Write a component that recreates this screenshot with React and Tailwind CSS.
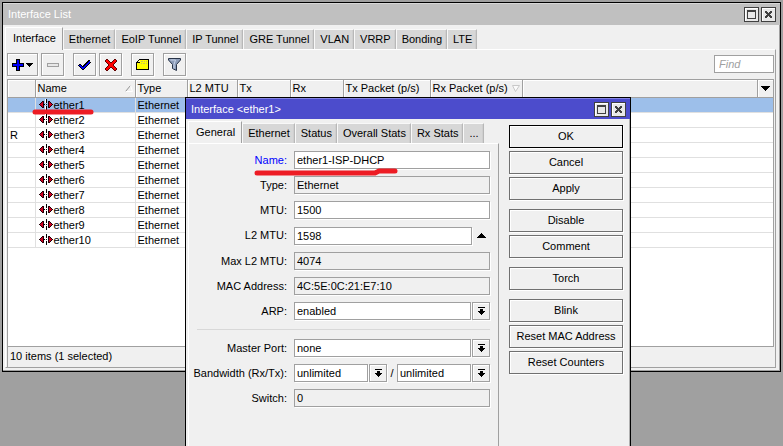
import React from "react";

const FONT = "font-['Liberation_Sans',Arial,sans-serif] text-[11px] leading-[15px] text-black";

function MaximizeIcon() {
  return (
    <svg width="9" height="9" viewBox="0 0 9 9" shapeRendering="crispEdges">
      <rect width="9" height="9" fill="#404040" />
      <rect x="1" y="2" width="7" height="6" fill="#e8e8e8" />
    </svg>
  );
}

function CloseIcon() {
  return (
    <svg width="9" height="9" viewBox="0 0 9 9" shapeRendering="crispEdges">
      <path d="M1 1h2v1h1v1h1V2h1V1h2v2H7v1H6v1h1v1h1v2H6V7H5V6H4v1H3v1H1V6h1V5h1V4H2V3H1z" fill="#404040" />
    </svg>
  );
}

function WindowButtons() {
  const cls =
    "flex size-[15px] items-center justify-center border border-[#404040] bg-[#e8e8e8] shadow-[inset_1px_1px_0_#fff]";
  return (
    <div className="flex gap-[2px]">
      <button type="button" aria-label="Maximize" className={cls}><MaximizeIcon /></button>
      <button type="button" aria-label="Close" className={cls}><CloseIcon /></button>
    </div>
  );
}

function Tabs({ items }) {
  return (
    <div role="tablist" className="flex items-end whitespace-nowrap">
      {items.map((t, i) =>
        i === 0 ? (
          <button key={t} type="button" role="tab" aria-selected="true"
            className="-mb-px h-[23px] border-t border-r border-l border-t-white border-l-white border-r-[#a0a0a0] bg-[#f0f0f0] pr-[6px] pb-0.5 pl-[7px]">
            {t}
          </button>
        ) : (
          <button key={t} type="button" role="tab" aria-selected="false"
            className="h-5 border-t border-r border-l border-t-[#f8f8f8] border-l-[#f8f8f8] border-r-[#b8b8b8] bg-[#d7d7d7] pr-1 pl-[5px] shadow-[inset_-1px_0_0_#cfcfcf]">
            {t}
          </button>
        )
      )}
    </div>
  );
}

function ToolButton({ label, wide, children }) {
  return (
    <button type="button" aria-label={label}
      className={`${wide ? "w-[31px]" : "w-[23px]"} flex h-[23px] items-center justify-center gap-[2px] border border-[#a0a0a0] bg-[#f0f0f0] shadow-[inset_1px_1px_0_#fff,1px_1px_0_#fff]`}>
      {children}
    </button>
  );
}

function PlusIcon() {
  return (
    <svg width="12" height="12" viewBox="0 0 12 12" shapeRendering="crispEdges">
      <path d="M4 0h4v4h4v4H8v4H4V8H0V4h4z" fill="#000" />
      <path d="M5 1h2v4h4v2H7v4H5V7H1V5h4z" fill="#0000ff" />
    </svg>
  );
}

function DownTriangle({ small }) {
  return small ? (
    <svg width="7" height="4" viewBox="0 0 7 4" shapeRendering="crispEdges">
      <path d="M0 0h7v1H6v1H5v1H4v1H3V3H2V2H1V1H0z" fill="#000" />
    </svg>
  ) : (
    <svg width="9" height="5" viewBox="0 0 9 5" shapeRendering="crispEdges">
      <path d="M0 0h9v1H8v1H7v1H6v1H5v1H4V4H3V3H2V2H1V1H0z" fill="#000" />
    </svg>
  );
}

function MinusIcon() {
  return (
    <svg width="12" height="4" viewBox="0 0 12 4" shapeRendering="crispEdges">
      <rect width="12" height="4" fill="#a0a0a0" />
      <rect x="1" y="1" width="10" height="2" fill="#e8e8e8" />
    </svg>
  );
}

function CheckIcon() {
  return (
    <svg width="13" height="12" viewBox="0 0 13 12" shapeRendering="crispEdges">
      <path d="M1 5h2v1h1v1h1V6h1V5h1V4h1V3h1V2h1V1h2v2h1v1h-1v1h-1v1h-1v1H9v1H8v1H7v1H6v1H4v-1H3V9H2V8H1V7H0V6h1z" fill="#000" />
      <path d="M1 6h2v1h1v1h2V7h1V6h1V5h1V4h1V3h1V2h1v2h-1v1h-1v1H9v1H8v1H7v1H6v1H4V9H3V8H2V7H1z" fill="#0000ff" />
    </svg>
  );
}

function CrossIcon() {
  return (
    <svg width="12" height="12" viewBox="0 0 12 12" shapeRendering="crispEdges">
      <path d="M1 0h2v1h1v1h1v1h2V2h1V1h1V0h2v1h1v2h-1v1h-1v1H9v2h1v1h1v1h1v2h-1v1H9v-1H8v-1H7V9H5v1H4v1H3v1H1v-1H0V9h1V8h1V7h1V5H2V4H1V3H0V1h1z" fill="#600000" />
      <path d="M1 1h2v1h1v1h1v1h2V3h1V2h1V1h2v2h-1v1H9v1H8v2h1v1h1v1h1v2H9v-1H8V9H7V8H5v1H4v1H3v1H1V9h1V8h1V7h1V5H3V4H2V3H1z" fill="#ff0000" />
    </svg>
  );
}

function NoteIcon() {
  return (
    <svg width="13" height="11" viewBox="0 0 13 11" shapeRendering="crispEdges">
      <path d="M3 0h10v11H0V3h1V2h1V1h1z" fill="#000" />
      <path d="M4 1h8v9H1V4h3z" fill="#ffff00" />
      <path d="M3 1h1v2H1V3h1V2h1z" fill="#ffff90" />
      <path d="M5 2h2v1H5zM8 2h1v1H8zM10 2h1v1h-1zM5 4h1v1H5zM7 4h2v1H7zM10 4h1v1h-1z" fill="#c8c060" />
    </svg>
  );
}

function FilterIcon() {
  return (
    <svg width="13" height="13" viewBox="0 0 13 13">
      <path d="M.5.5h12v1.5L8.5 6.5v6L4.5 10.5V6.5L.5 2z" fill="#8c9cb8" stroke="#283448" />
      <path d="M2.5 2h5L6 6.5v4" fill="none" stroke="#c8d4e8" />
    </svg>
  );
}

function EtherIcon() {
  return (
    <svg width="15" height="11" viewBox="0 0 15 11" shapeRendering="crispEdges" className="shrink-0">
      <path d="M0 5h1V4h1V3h1V2h2v7H3V8H2V7H1V6H0zM14 5h-1V4h-1V3h-1V2H9v7h2V8h1V7h1V6h1z" fill="#200008" />
      <path d="M1 5h1V4h1V3h1v5H3V7H2V6H1zM13 5h-1V4h-1V3h-1v5h1V7h1V6h1z" fill="#d00020" />
      <path d="M6 0h2v4H6zM6 5h2v1H6zM6 7h2v4H6z" fill="#fff" />
      <path d="M7 0h1v4H7zM4 5h2v1H4zM7 5h1v1H7zM7 7h1v4H7z" fill="#000" />
    </svg>
  );
}

const headCell =
  "h-[17px] border-r border-[#a0a0a0] bg-[#f0f0f0] p-0 pl-0.5 text-left font-normal whitespace-nowrap shadow-[inset_1px_1px_0_#fff]";

const columns = ["", "Name", "Type", "L2 MTU", "Tx", "Rx", "Tx Packet (p/s)", "Rx Packet (p/s)", ""];
const rows = Array.from({ length: 10 }, (_, i) => ({ name: `ether${i + 1}`, flag: i === 2 ? "R" : "" }));

function InterfaceTable() {
  return (
    <table className="w-full table-fixed border-collapse">
      <colgroup>
        <col className="w-[27px]" />
        <col className="w-[100px]" />
        <col className="w-[52px]" />
        <col className="w-[50px]" />
        <col className="w-[53px]" />
        <col className="w-[53px]" />
        <col className="w-[87px]" />
        <col className="w-[92px]" />
        <col />
        <col className="w-4" />
      </colgroup>
      <thead>
        <tr className="border-b border-[#a0a0a0]">
          {columns.map((c, i) => (
            <th key={i} className={headCell}>
              <span className="flex items-center justify-between pr-0.5">
                {c}
                {c === "Name" && (
                  <svg width="8" height="7" viewBox="0 0 8 7">
                    <path d="M.5 6.5l5-6" stroke="#909090" fill="none" />
                    <path d="M5.5.5l2 6h-7" stroke="#fff" fill="none" />
                  </svg>
                )}
                {c === "Rx Packet (p/s)" && (
                  <svg width="8" height="7" viewBox="0 0 8 7">
                    <path d="M7.5.5h-7l3 6z" stroke="#c8c8c8" fill="#fafafa" />
                  </svg>
                )}
              </span>
            </th>
          ))}
          <th className="bg-[#f0f0f0] p-0 shadow-[inset_1px_1px_0_#fff]">
            <button type="button" aria-label="Choose columns" className="flex h-4 w-full items-center justify-center">
              <DownTriangle />
            </button>
          </th>
        </tr>
      </thead>
      <tbody>
        {rows.map((r, i) => (
          <tr key={r.name} className={`border-b border-[#e0e0e0] ${i === 0 ? "bg-[#9dbfea]" : "bg-white"}`}>
            <td className="h-[15px] border-r border-[#e0e0e0] p-0 pl-0.5 leading-[14px]">{r.flag}</td>
            <td className="relative h-[15px] border-r border-[#e0e0e0] p-0 pl-[3px] leading-[14px]">
              <span className="flex items-center">
                <EtherIcon />
                {r.name}
              </span>
              {i === 0 && (
                <svg className="absolute top-[11px] -left-1" width="64" height="6" viewBox="0 0 64 6">
                  <path d="M3 3h56" stroke="#ed1c24" strokeWidth="5" strokeLinecap="round" />
                </svg>
              )}
            </td>
            <td className="h-[15px] border-r border-[#e0e0e0] p-0 pl-0.5 leading-[14px]">Ethernet</td>
            <td colSpan="7" className="p-0" />
          </tr>
        ))}
      </tbody>
    </table>
  );
}

const boxCls =
  "h-[18px] min-w-0 flex-1 appearance-none rounded-none border border-[#a0a0a0] pl-0.5 leading-[15px] outline-none shadow-[1px_1px_0_#fff]";

function Field({ id, label, blue, children }) {
  return (
    <div className="flex items-center gap-[7px]">
      <label htmlFor={id} className={`w-[98px] shrink-0 text-right whitespace-nowrap ${blue ? "text-[#0000ff]" : ""}`}>
        {label}
      </label>
      <div className="relative flex min-w-0 flex-1 items-center">{children}</div>
    </div>
  );
}

function Text({ id, value, readOnly }) {
  return (
    <input id={id} type="text" defaultValue={value} readOnly={readOnly}
      className={`${boxCls} ${readOnly ? "bg-[#f0f0f0]" : "bg-white"}`} />
  );
}

function Combo({ id, value, label }) {
  return (
    <div className="flex min-w-0 flex-1 gap-px">
      <select id={id} aria-label={label} defaultValue={value} className={`${boxCls} bg-white`}>
        <option>{value}</option>
      </select>
      <button type="button" aria-label="Show options"
        className="flex size-[18px] shrink-0 items-center justify-center border border-[#a0a0a0] bg-[#f0f0f0] shadow-[inset_1px_1px_0_#fff,1px_1px_0_#fff]">
        <svg width="7" height="8" viewBox="0 0 7 8" shapeRendering="crispEdges">
          <path d="M0 0h7v1H0zM2 2h3v2h2v1H6v1H5v1H4v1H3V7H2V6H1V5H0V4h2z" fill="#000" />
        </svg>
      </button>
    </div>
  );
}

const actionGroups = [
  ["OK", "Cancel", "Apply"],
  ["Disable", "Comment"],
  ["Torch"],
  ["Blink", "Reset MAC Address", "Reset Counters"],
];

function InterfaceDialog() {
  return (
    <section role="dialog" aria-label="Interface ether1"
      className="absolute top-[97px] bottom-0 left-[185px] flex w-[446px] flex-col border border-b-0 border-black bg-[#f0f0f0]">
      <header className="flex h-[22px] items-center justify-between border-t border-[#8484e4] bg-[#4c4ccc] pr-1 pl-[5px] text-white">
        <h2>Interface &lt;ether1&gt;</h2>
        <WindowButtons />
      </header>
      <div className="flex flex-1 border-r border-[#b0b0b0] pl-0.5 pt-0.5">
        <div className="flex min-w-0 flex-1 flex-col">
          <Tabs items={["General", "Ethernet", "Status", "Overall Stats", "Rx Stats", "..."]} />
          <form className="flex flex-1 flex-col gap-[7px] border-t border-r border-l border-t-white border-l-white border-r-[#a0a0a0] pt-[7px] pr-2 pb-[39px]">
            <Field id="name" label="Name:" blue>
              <Text id="name" value="ether1-ISP-DHCP" />
              <svg className="absolute top-4 -left-10" width="146" height="10" viewBox="0 0 146 10">
                <path d="M3 6h118l4-2h16" fill="none" stroke="#ed1c24" strokeWidth="5" strokeLinecap="round" strokeLinejoin="round" />
              </svg>
            </Field>
            <Field id="type" label="Type:"><Text id="type" value="Ethernet" readOnly /></Field>
            <Field id="mtu" label="MTU:"><Text id="mtu" value="1500" /></Field>
            <Field id="l2mtu" label="L2 MTU:">
              <Text id="l2mtu" value="1598" />
              <button type="button" aria-label="Collapse" className="flex h-[19px] w-[18px] items-center justify-center">
                <svg width="9" height="5" viewBox="0 0 9 5" shapeRendering="crispEdges">
                  <path d="M4 0h1v1h1v1h1v1h1v1h1v1H0V4h1V3h1V2h1V1h1z" fill="#000" />
                </svg>
              </button>
            </Field>
            <Field id="maxl2" label="Max L2 MTU:"><Text id="maxl2" value="4074" readOnly /></Field>
            <Field id="mac" label="MAC Address:"><Text id="mac" value="4C:5E:0C:21:E7:10" readOnly /></Field>
            <Field id="arp" label="ARP:"><Combo id="arp" value="enabled" /></Field>
            <hr className="my-0.5 ml-2 border-[#d8d8d8]" />
            <Field id="master" label="Master Port:"><Combo id="master" value="none" /></Field>
            <Field id="rx" label="Bandwidth (Rx/Tx):">
              <Combo id="rx" value="unlimited" />
              <span className="w-[10px] text-center">/</span>
              <Combo id="tx" value="unlimited" label="Bandwidth Tx" />
            </Field>
            <Field id="switch" label="Switch:"><Text id="switch" value="0" readOnly /></Field>
          </form>
        </div>
        <div className="flex w-[130px] flex-col gap-[9px] pt-1 pr-1.5 pl-[10px]">
          {actionGroups.map((g) => (
            <div key={g[0]} className="flex flex-col gap-[3px]">
              {g.map((a) => (
                <button key={a} type="button"
                  className={`h-[23px] border bg-[#f0f0f0] whitespace-nowrap shadow-[inset_1px_1px_0_#fff,1px_1px_0_#fff] ${a === "OK" ? "border-black" : "border-[#707070]"}`}>
                  {a}
                </button>
              ))}
            </div>
          ))}
        </div>
      </div>
    </section>
  );
}

export default function App() {
  return (
    <div className={`relative min-h-screen bg-[#a0a0a0] p-0.5 ${FONT}`}>
      <main className="border border-black bg-[#f0f0f0]">
        <header className="flex h-[22px] items-center justify-between border-t border-[#d8d8d8] bg-[#c0c0c0] pr-1 pl-[5px] text-white">
          <h1>Interface List</h1>
          <WindowButtons />
        </header>
        <div className="border-r border-b border-[#a0a0a0] pt-0.5 pr-[3px] pb-0.5 pl-0.5">
          <Tabs items={["Interface", "Ethernet", "EoIP Tunnel", "IP Tunnel", "GRE Tunnel", "VLAN", "VRRP", "Bonding", "LTE"]} />
          <div className="border border-t-white border-r-[#a0a0a0] border-b-[#a0a0a0] border-l-white px-px pt-[3px]">
            <div className="flex h-[26px] items-start justify-between">
              <div className="flex gap-[9px]">
                <div className="flex gap-[3px]">
                  <ToolButton label="Add" wide><PlusIcon /><DownTriangle small /></ToolButton>
                  <ToolButton label="Remove"><MinusIcon /></ToolButton>
                </div>
                <div className="flex gap-[3px]">
                  <ToolButton label="Enable"><CheckIcon /></ToolButton>
                  <ToolButton label="Disable"><CrossIcon /></ToolButton>
                </div>
                <ToolButton label="Comment"><NoteIcon /></ToolButton>
                <ToolButton label="Filter"><FilterIcon /></ToolButton>
              </div>
              <input type="search" aria-label="Find" placeholder="Find"
                className="mt-0.5 h-[18px] w-[60px] appearance-none border border-[#a0a0a0] bg-white px-1 italic outline-none placeholder:text-[#a0a0a0]" />
            </div>
            <div className="min-h-[268px] border border-[#a0a0a0] bg-white">
              <InterfaceTable />
            </div>
            <footer className="h-5 border-l border-[#a0a0a0] py-0.5 pl-0.5">10 items (1 selected)</footer>
          </div>
        </div>
      </main>
      <InterfaceDialog />
    </div>
  );
}
